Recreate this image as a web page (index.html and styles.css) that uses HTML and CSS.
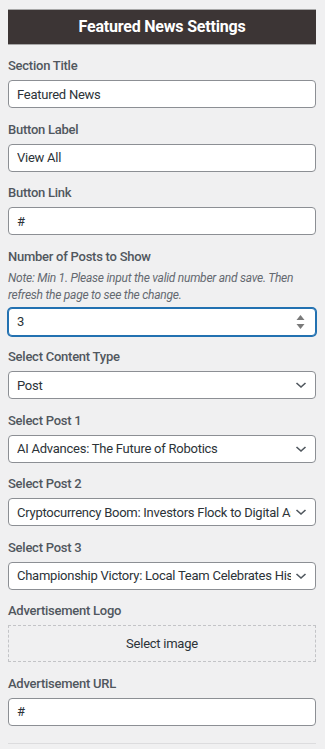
FILE: index.html
```html
<!DOCTYPE html>
<html lang="en">
<head>
  <meta charset="UTF-8" />
  <meta name="viewport" content="width=device-width, initial-scale=1.0" />
  <title>Featured News Settings</title>
  <link rel="stylesheet" href="styles.css">
</head>
<body>
  <div class="widget">
    <h3 class="widget-title">Featured News Settings</h3>

    <div class="field">
      <label>Section Title</label>
      <input class="text-input" type="text" value="Featured News" />
    </div>

    <div class="field">
      <label>Button Label</label>
      <input class="text-input" type="text" value="View All" />
    </div>

    <div class="field">
      <label>Button Link</label>
      <input class="text-input" type="text" value="#" />
    </div>

    <div class="field">
      <label>Number of Posts to Show</label>
      <p class="note">Note: Min 1. Please input the valid number and save. Then refresh the page to see the change.</p>
      <div class="number-wrap">
        <input class="text-input focused" type="text" value="3" />
        <span class="spinner">
          <svg width="9" height="20" viewBox="0 0 9 20">
            <path d="M4.5 3 L8.5 8 L0.5 8 Z" fill="#7a7a7a" />
            <path d="M0.5 12 L8.5 12 L4.5 17 Z" fill="#7a7a7a" />
          </svg>
        </span>
      </div>
    </div>

    <div class="field">
      <label>Select Content Type</label>
      <div class="select-wrap">
        <select class="select-input">
          <option>Post</option>
        </select>
        <svg class="chevron" width="12" height="8" viewBox="0 0 12 8"><path d="M1.5 2 L6 6 L10.5 2" fill="none" stroke="#50575e" stroke-width="1.6" /></svg>
      </div>
    </div>

    <div class="field">
      <label>Select Post 1</label>
      <div class="select-wrap">
        <select class="select-input">
          <option>AI Advances: The Future of Robotics</option>
        </select>
        <svg class="chevron" width="12" height="8" viewBox="0 0 12 8"><path d="M1.5 2 L6 6 L10.5 2" fill="none" stroke="#50575e" stroke-width="1.6" /></svg>
      </div>
    </div>

    <div class="field">
      <label>Select Post 2</label>
      <div class="select-wrap">
        <select class="select-input">
          <option>Cryptocurrency Boom: Investors Flock to Digital Assets</option>
        </select>
        <svg class="chevron" width="12" height="8" viewBox="0 0 12 8"><path d="M1.5 2 L6 6 L10.5 2" fill="none" stroke="#50575e" stroke-width="1.6" /></svg>
      </div>
    </div>

    <div class="field">
      <label>Select Post 3</label>
      <div class="select-wrap">
        <select class="select-input">
          <option>Championship Victory: Local Team Celebrates Historic Win</option>
        </select>
        <svg class="chevron" width="12" height="8" viewBox="0 0 12 8"><path d="M1.5 2 L6 6 L10.5 2" fill="none" stroke="#50575e" stroke-width="1.6" /></svg>
      </div>
    </div>

    <div class="field">
      <label>Advertisement Logo</label>
      <div class="image-select">Select image</div>
    </div>

    <div class="field">
      <label>Advertisement URL</label>
      <input class="text-input" type="text" value="#" />
    </div>
  </div>
</body>
</html>
```

FILE: styles.css
```css
body {
  margin: 0;
  padding: 0;
  font-family: Roboto, 'Noto Sans', sans-serif;
  font-size: 13px;
  letter-spacing: -0.25px;
  background: #f0f0f1;
  color: #3c434a;
}
.widget {
  margin: 9px 9px 0 8px;
  padding-bottom: 17px;
  border-bottom: 1px solid #dcdcde;
}
.widget-title {
  margin: 0 0 12px;
  height: 34px;
  line-height: 34px;
  background: #3c3535;
  border-top: 1px solid #a7a7a7;
  border-bottom: 1px solid #a7a7a7;
  color: #fff;
  text-align: center;
  font-size: 16px;
  font-weight: bold;
  letter-spacing: -0.2px;
}
.field {
  margin-bottom: 12.5px;
}
.field:last-child {
  margin-bottom: 0;
}
.field label {
  display: block;
  line-height: 18px;
  margin-bottom: 5px;
  font-weight: 500;
  color: #50575e;
}
.note {
  margin: -1px 0 4px;
  font-size: 12px;
  line-height: 17px;
  font-style: italic;
  color: #646970;
}
.text-input, .select-input {
  display: block;
  box-sizing: border-box;
  width: 100%;
  height: 28px;
  margin: 0;
  padding: 0 8px;
  font-family: inherit;
  font-size: 13px;
  letter-spacing: -0.25px;
  color: #2c3338;
  background: #fff;
  border: 1px solid #8c8f94;
  border-radius: 4px;
  outline: none;
}
.text-input.focused {
  border-color: #2271b1;
  box-shadow: 0 0 0 1px #2271b1;
}
.number-wrap, .select-wrap {
  position: relative;
}
.spinner {
  position: absolute;
  top: 4px;
  right: 11px;
  display: flex;
}
.select-input {
  appearance: none;
  -webkit-appearance: none;
  padding-right: 24px;
  white-space: nowrap;
  overflow: hidden;
}
.chevron {
  position: absolute;
  top: 10px;
  right: 9px;
  pointer-events: none;
}
.image-select {
  margin-top: 2px;
  height: 35px;
  line-height: 35px;
  border: 1px dashed #c3c4c7;
  text-align: center;
  color: #2c3338;
}
```
